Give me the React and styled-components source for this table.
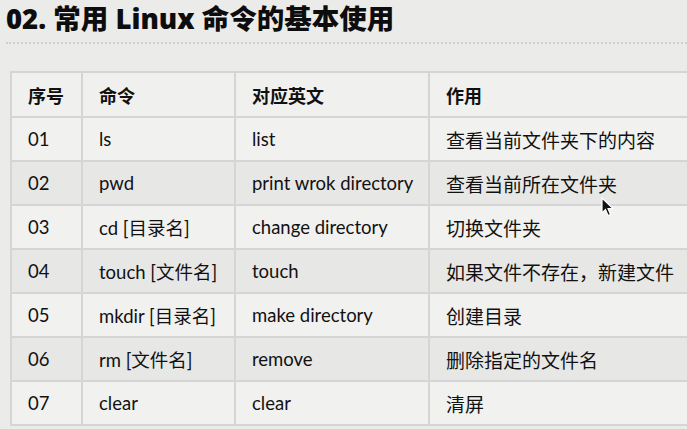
import React from 'react';
import styled, { createGlobalStyle } from 'styled-components';

const rows = [
  ['01', 'ls', 'list', '查看当前文件夹下的内容'],
  ['02', 'pwd', 'print wrok directory', '查看当前所在文件夹'],
  ['03', 'cd [目录名]', 'change directory', '切换文件夹'],
  ['04', 'touch [文件名]', 'touch', '如果文件不存在，新建文件'],
  ['05', 'mkdir [目录名]', 'make directory', '创建目录'],
  ['06', 'rm [文件名]', 'remove', '删除指定的文件名'],
  ['07', 'clear', 'clear', '清屏'],
];

const App = () => {
  return (
    <Page>
      <GlobalStyle />
      <Title>02. 常用 Linux 命令的基本使用</Title>
      <Table>
        <colgroup>
          <col style={{ width: 71 }} />
          <col style={{ width: 153 }} />
          <col style={{ width: 194 }} />
          <col />
        </colgroup>
        <thead>
          <tr>
            <Th>序号</Th>
            <Th>命令</Th>
            <Th>对应英文</Th>
            <Th>作用</Th>
          </tr>
        </thead>
        <tbody>
          {rows.map((r, i) => (
            <Row key={r[0]} $shade={i % 2 === 1}>
              {r.map((c, j) => (
                <Td key={j}>{c}</Td>
              ))}
            </Row>
          ))}
        </tbody>
      </Table>
      <Cursor width="14" height="20" viewBox="0 0 14 20">
        <path d="M1 1 L1 16 L4.5 12.5 L7 18.5 L9.5 17.5 L7 11.5 L12 11.5 Z" fill="#111" stroke="#fff" strokeWidth="1.2" />
      </Cursor>
    </Page>
  );
};

const GlobalStyle = createGlobalStyle`
  html, body {
    margin: 0;
    padding: 0;
    background: #ebebea;
    overflow: hidden;
  }
`;

const Page = styled.div`
  position: relative;
  width: 687px;
  height: 429px;
  overflow: hidden;
  background: #ebebea;
  font-family: Lato, "Noto Sans CJK SC", sans-serif;
  color: #222;
`;

const Title = styled.h1`
  margin: 0 0 0 6px;
  padding: 4px 0 8px;
  width: 700px;
  font-family: "Open Sans", "Noto Sans CJK SC", sans-serif;
  font-size: 27.5px;
  font-weight: 800;
  line-height: 30px;
  color: #0d0d0d;
  border-bottom: 2px dotted #cfcfcf;
`;

const Table = styled.table`
  margin: 27px 0 0 10px;
  width: 720px;
  border-collapse: collapse;
  table-layout: fixed;
  border: 2px solid #d5d5d5;
`;

const Th = styled.th`
  height: 43px;
  padding: 0 0 0 16px;
  text-align: left;
  font-family: "Noto Sans CJK SC", sans-serif;
  font-size: 18px;
  font-weight: 700;
  color: #111;
  background: #f0f0ef;
  border: 2px solid #d5d5d5;
`;

const Row = styled.tr`
  background: ${(p) => (p.$shade ? '#e7e7e6' : '#f1f1f0')};
`;

const Td = styled.td`
  height: 42px;
  padding: 0 0 0 16px;
  font-size: 18.5px;
  font-weight: 400;
  color: #111;
  white-space: nowrap;
  border: 2px solid #d5d5d5;
  font-family: Lato, "Noto Sans CJK SC", sans-serif;

  &:last-child {
    font-size: 19px;
  }
`;

const Cursor = styled.svg`
  position: absolute;
  left: 601px;
  top: 197px;
`;

export default App;
